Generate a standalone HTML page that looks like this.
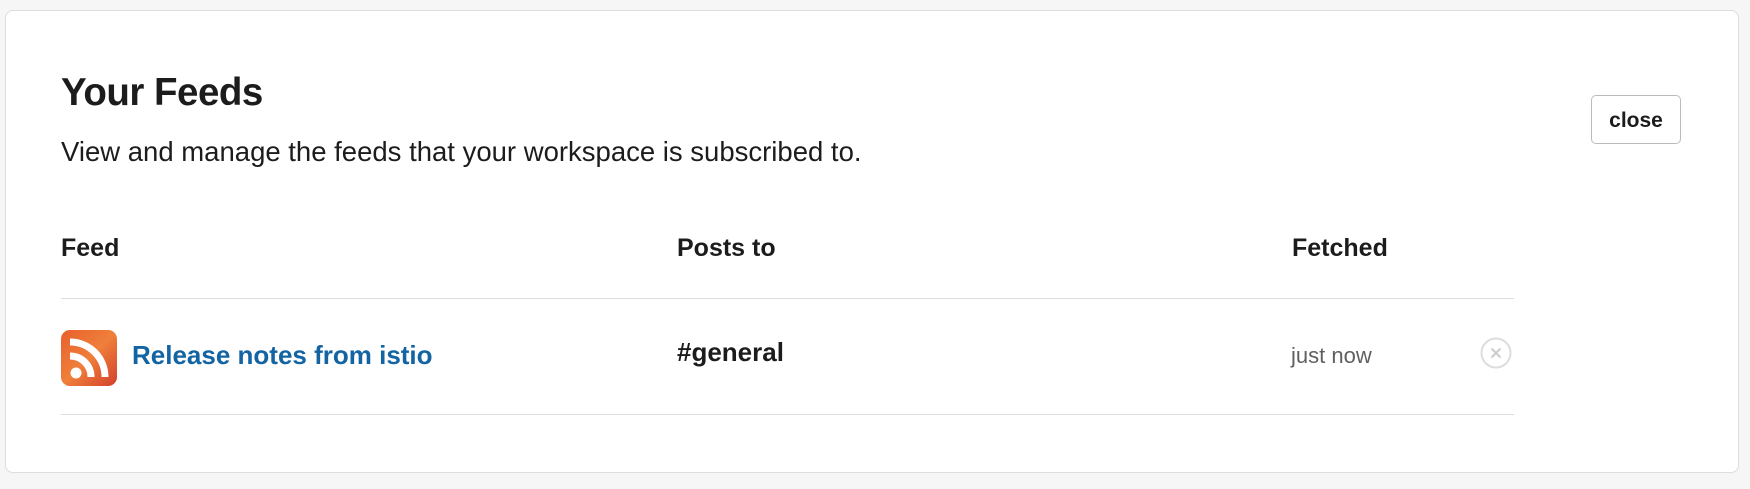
<!DOCTYPE html>
<html><head><meta charset="utf-8"><style>
body{margin:0;width:1750px;height:489px;background:#f6f6f6;font-family:"Liberation Sans",sans-serif;color:#1d1c1d;position:relative;overflow:hidden}
.card{position:absolute;left:5px;top:10px;width:1734px;height:463px;background:#fff;border:1px solid #ddd;border-radius:8px;box-sizing:border-box}
.t{position:absolute;white-space:nowrap}
.line{position:absolute;left:61px;width:1453px;height:1px;background:#ddd}
.btn{position:absolute;left:1591px;top:95px;width:90px;height:49px;box-sizing:border-box;border:1px solid #bbb;border-radius:5px;font-weight:bold;font-size:21px;text-align:center;line-height:49px}
</style></head><body>
<div class="card"></div>
<div class="t" style="left:61px;top:71px;font-size:38.5px;font-weight:bold;letter-spacing:-0.5px">Your Feeds</div>
<div class="t" style="left:61px;top:136px;font-size:27.5px">View and manage the feeds that your workspace is subscribed to.</div>
<div class="btn">close</div>
<div class="t" style="left:61px;top:234px;font-size:25px;font-weight:bold">Feed</div>
<div class="t" style="left:677px;top:234px;font-size:25px;font-weight:bold">Posts to</div>
<div class="t" style="left:1292px;top:234px;font-size:25px;font-weight:bold">Fetched</div>
<div class="line" style="top:298px"></div>
<div class="line" style="top:414px"></div>
<svg style="position:absolute;left:61px;top:330px" width="56" height="56" viewBox="0 0 56 56">
<defs><linearGradient id="g" x1="0" y1="0" x2="1" y2="1"><stop offset="0" stop-color="#e8602c"/><stop offset=".5" stop-color="#ef7f3a"/><stop offset="1" stop-color="#d3402c"/></linearGradient></defs>
<rect width="56" height="56" rx="9" fill="url(#g)"/>
<circle cx="15" cy="43" r="5.5" fill="#fff"/>
<path d="M9 26a21 21 0 0 1 21 21" stroke="#fff" stroke-width="7" fill="none"/>
<path d="M9 12a35 35 0 0 1 35 35" stroke="#fff" stroke-width="7" fill="none"/>
</svg>
<div class="t" style="left:132px;top:340px;font-size:26px;font-weight:bold;color:#1264a3">Release notes from istio</div>
<div class="t" style="left:677px;top:337px;font-size:26px;font-weight:bold">#general</div>
<div class="t" style="left:1291px;top:343px;font-size:22px;color:#616061">just now</div>
<svg style="position:absolute;left:1480px;top:337px" width="32" height="32" viewBox="0 0 32 32">
<circle cx="16" cy="16" r="14.5" stroke="#ddd" stroke-width="2" fill="none"/>
<path d="M11.5 11.5l9 9M20.5 11.5l-9 9" stroke="#ccc" stroke-width="2"/>
</svg>
</body></html>
